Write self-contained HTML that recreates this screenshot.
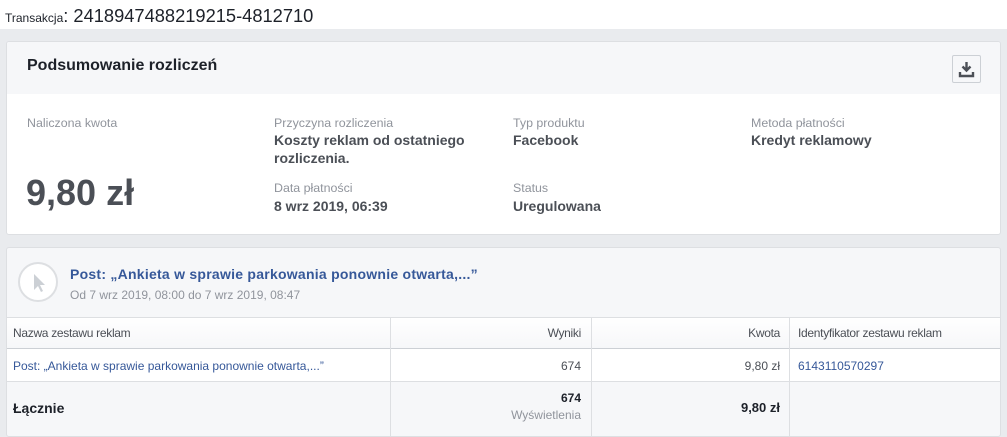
<!DOCTYPE html>
<html><head><meta charset="utf-8"><style>
*{margin:0;padding:0;box-sizing:border-box}
body{width:1007px;height:431px;overflow:hidden;background:#e9ebee;font-family:"Liberation Sans",Arial,sans-serif;position:relative}
.top{position:absolute;left:0;top:0;width:1007px;height:29px;background:#fff}
.a{position:absolute;white-space:nowrap}
.card{position:absolute;left:6px;width:995px;background:#fff;border:1px solid #dddfe2;border-radius:3px;overflow:hidden}
.lbl{font-size:12.4px;color:#90949c}
.val{font-size:14px;font-weight:bold;color:#4b4f56;line-height:18px}
.th{font-size:12px;color:#4b4f56;letter-spacing:-0.3px}
.td{font-size:12px}
</style></head><body>
<div class="top"></div>
<div class="a" style="left:5px;top:5px;font-size:12px;color:#1d2129">Transakcja<span style="font-size:18.3px">: 2418947488219215-4812710</span></div>

<div class="card" style="top:41px;height:194px">
 <div style="position:absolute;left:0;top:0;width:100%;height:52px;background:#f6f7f9"></div>
 <div class="a" style="left:20px;top:15px;font-size:16px;font-weight:bold;color:#1d2129">Podsumowanie rozliczeń</div>
 <div class="a" style="left:945px;top:13px;width:29px;height:28px;border:1px solid #ccd0d5;border-radius:2px;background:#f6f7f9">
  <svg width="27" height="26" viewBox="0 0 27 26"><path d="M13.5 6v8M9.5 10.5l4 4 4-4" stroke="#4b4f56" stroke-width="2.4" fill="none"/><path d="M7 16v4h13v-4" stroke="#4b4f56" stroke-width="2.4" fill="none"/></svg>
 </div>
 <div class="a lbl" style="left:20px;top:74px">Naliczona kwota</div>
 <div class="a" style="left:19px;top:130px;font-size:36px;font-weight:bold;color:#4b4f56">9,80 zł</div>
 <div class="a lbl" style="left:267px;top:74px">Przyczyna rozliczenia</div>
 <div class="a val" style="left:267px;top:89px">Koszty reklam od ostatniego<br>rozliczenia.</div>
 <div class="a lbl" style="left:267px;top:139px">Data płatności</div>
 <div class="a val" style="left:267px;top:155px">8 wrz 2019, 06:39</div>
 <div class="a lbl" style="left:506px;top:74px">Typ produktu</div>
 <div class="a val" style="left:506px;top:89px">Facebook</div>
 <div class="a lbl" style="left:506px;top:139px">Status</div>
 <div class="a val" style="left:506px;top:155px">Uregulowana</div>
 <div class="a lbl" style="left:744px;top:74px">Metoda płatności</div>
 <div class="a val" style="left:744px;top:89px">Kredyt reklamowy</div>
</div>

<div class="card" style="top:247px;height:190px;background:#f6f7f9">
 <div class="a" style="left:11px;top:14px;width:40px;height:40px;border:2px solid #dddfe2;border-radius:50%;background:#fff">
  <svg width="36" height="36" viewBox="0 0 36 36"><path d="M14 10v16l4-4 3 6 2-1-3-6h5z" fill="#ccd0d5"/></svg>
 </div>
 <div class="a" style="left:63px;top:18px;font-size:14px;font-weight:bold;color:#365899;letter-spacing:0.25px">Post: „Ankieta w sprawie parkowania ponownie otwarta,...”</div>
 <div class="a" style="left:63px;top:40px;font-size:12px;color:#90949c">Od 7 wrz 2019, 08:00 do 7 wrz 2019, 08:47</div>
 <div style="position:absolute;left:0;top:69px;width:100%;height:32px;background:linear-gradient(#fff,#f6f7f9);border-top:1px solid #dddfe2;border-bottom:1px solid #ccd0d5"></div>
 <div style="position:absolute;left:0;top:101px;width:100%;height:33px;background:#fff;border-bottom:1px solid #dddfe2"></div>
 <div style="position:absolute;left:383px;top:69px;width:1px;height:130px;background:#dddfe2"></div>
 <div style="position:absolute;left:584px;top:69px;width:1px;height:130px;background:#dddfe2"></div>
 <div style="position:absolute;left:782px;top:69px;width:1px;height:130px;background:#dddfe2"></div>
 <div class="a th" style="left:6px;top:78px">Nazwa zestawu reklam</div>
 <div class="a th" style="right:419px;top:78px">Wyniki</div>
 <div class="a th" style="right:220px;top:78px">Kwota</div>
 <div class="a th" style="left:791px;top:78px">Identyfikator zestawu reklam</div>
 <div class="a td" style="left:6px;top:111px;color:#365899">Post: „Ankieta w sprawie parkowania ponownie otwarta,...”</div>
 <div class="a td" style="right:419px;top:111px;color:#4b4f56">674</div>
 <div class="a td" style="right:220px;top:111px;color:#4b4f56">9,80 zł</div>
 <div class="a td" style="left:791px;top:111px;color:#365899">6143110570297</div>
 <div class="a" style="left:6px;top:152px;font-size:14px;font-weight:bold;color:#1d2129">Łącznie</div>
 <div class="a" style="right:419px;top:143px;font-size:12px;font-weight:bold;color:#1d2129">674</div>
 <div class="a" style="right:419px;top:160px;font-size:12px;color:#90949c">Wyświetlenia</div>
 <div class="a" style="right:220px;top:152px;font-size:13px;font-weight:bold;color:#1d2129">9,80 zł</div>
</div>
</body></html>
